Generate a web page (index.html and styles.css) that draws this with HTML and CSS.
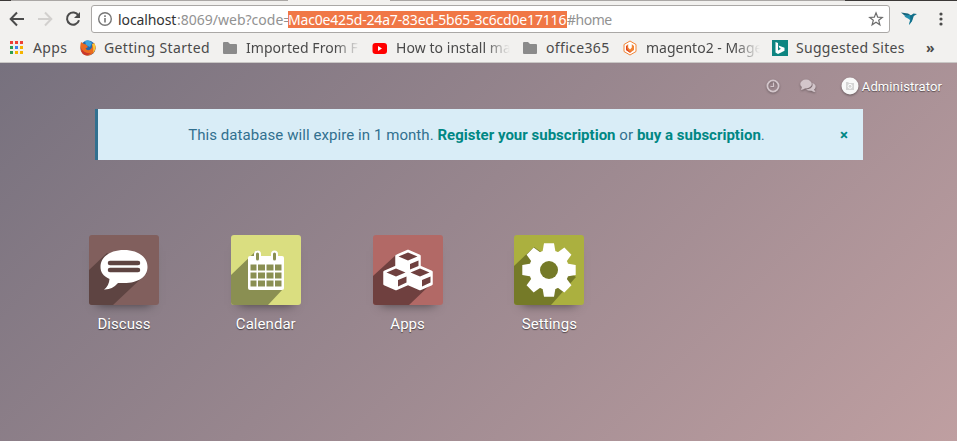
FILE: index.html
```html
<!DOCTYPE html>
<html lang="en">
<head>
<meta charset="utf-8">
<title>Odoo</title>
<link rel="stylesheet" href="styles.css">
</head>
<body>
<header class="browser">
  <div class="tabs"><span class="tab-end"></span><span class="tab-gap"></span><span class="tab-active"></span><span class="tab-gap wide"></span></div>
  <div class="toolbar">
    <svg class="nav" viewBox="0 0 16 16"><path d="M15 8H2M8 1.5L1.7 8L8 14.5" fill="none" stroke="#4b4b4b" stroke-width="2"/></svg>
    <svg class="nav" viewBox="0 0 16 16"><path d="M1 8H14M8 1.5L14.3 8L8 14.5" fill="none" stroke="#d2d0ce" stroke-width="2"/></svg>
    <svg class="nav" viewBox="0 0 16 16"><path d="M13.4 4.5A6.1 6.1 0 1 0 14 9.3" fill="none" stroke="#4b4b4b" stroke-width="2"/><path d="M15 1v6H9z" fill="#4b4b4b"/></svg>
    <div class="address">
      <svg class="info" viewBox="0 0 16 16"><circle cx="8" cy="8" r="6.3" fill="none" stroke="#777" stroke-width="1.4"/><path d="M8 7v4.6M8 4.2v1.7" stroke="#777" stroke-width="1.6"/></svg>
      <span class="host">localhost</span><span class="path">:8069/web?code=</span><span class="code">Mac0e425d-24a7-83ed-5b65-3c6cd0e17116</span><span class="hash">#home</span>
      <svg class="star" viewBox="0 0 16 16"><path d="M8 1.8l1.7 4.3 4.6.3-3.6 2.9 1.2 4.5L8 11.3l-3.9 2.5 1.2-4.5-3.6-2.9 4.6-.3z" fill="none" stroke="#6b6b6b" stroke-width="1.2"/></svg>
    </div>
    <svg class="bird" viewBox="0 0 16 14"><path d="M0 .5L7 1.500L11 4L7.500 5Q3 4 0 .5z" fill="#17647c"/><path d="M3 3.500L10 3L12 4L11 9L8 13L9 8L7 6.500Q4 5.500 3 3.500z" fill="#218fae"/><path d="M9 4L12.500 1.500L16 2L12.800 4L11 9L8 13L9.500 8z" fill="#126f89"/></svg>
    <svg class="menu" viewBox="0 0 4 14"><circle cx="2" cy="2" r="1.6"/><circle cx="2" cy="7" r="1.6"/><circle cx="2" cy="12" r="1.6"/></svg>
  </div>
  <nav class="bookmarks">
    <a class="bm apps"><svg viewBox="0 0 16 16"><path d="M1 1h3v3H1zM6 1h3v3H6zM11 1h3v3h-3z" fill="#ee4136"/><path d="M1 6h3v3H1zM1 11h3v3H1z" fill="#2c9f51"/><path d="M6 6h3v3H6z" fill="#3e82f0"/><path d="M11 6h3v3h-3zM6 11h3v3H6zM11 11h3v3h-3z" fill="#f5b400"/></svg><span>Apps</span></a>
    <a class="bm started"><svg viewBox="0 0 16 16"><circle cx="8" cy="8" r="7.6" fill="#2468ac"/><path d="M5 1Q9-1 12 3L10 7L6 5z" fill="#3da5df"/><path d="M1 2L4 4L6 4.5L8 7L5.5 8.5Q7 11 10 9.8Q13 8 12 4Q14 3 14.5 3.5Q17 9 13.5 13Q8 18 3 14Q-1 10 1 2z" fill="#ea6b20"/><path d="M12 4L14.5 3.5Q17 9 13 13Q14 8 12 4z" fill="#fac737"/><path d="M1 8Q4 14 11 13Q7 17 3 14Q1 12 1 8z" fill="#c9372c"/></svg><span>Getting Started</span></a>
    <a class="bm imported"><svg viewBox="0 0 16 16"><path d="M1 3Q1 2 2 2h4l2 2h6q1 0 1 1v8q0 1-1 1H2q-1 0-1-1z" fill="#8b8b8b"/></svg><span class="fade">Imported From F</span></a>
    <a class="bm video"><svg viewBox="0 0 16 16"><rect x=".5" y="3" width="14.5" height="11" rx="3" fill="#f00"/><path d="M6 6v5l4-2.5z" fill="#fff"/></svg><span class="fade">How to install ma</span></a>
    <a class="bm office"><svg viewBox="0 0 16 16"><path d="M1 3Q1 2 2 2h4l2 2h6q1 0 1 1v8q0 1-1 1H2q-1 0-1-1z" fill="#8b8b8b"/></svg><span>office365</span></a>
    <a class="bm magento"><svg viewBox="0 0 16 16"><path d="M8 1l6 3.500v7L8 15l-6-3.500v-7z" fill="#fff" stroke="#f28334" stroke-width="1"/><path d="M4 6L6.200 4V7.500L8 9.500L9.800 7.500V4L12 6V10L8 12.700L4 10z" fill="#f28334"/><path d="M4 6.300L5.200 5.500V9L8 12L9.800 11L8 12.700L4 10z" fill="#dc4424"/></svg><span class="fade">magento2 - Mage</span></a>
    <a class="bm suggested"><svg viewBox="0 0 16 16"><path d="M0 0h16v16H0z" fill="#0e8581"/><path d="M3.500 2l2.500 1v7.500l3-1.700-1.500-.8-1-2.500 6 2.200v3L6 14l-2.500-1.500z" fill="#fff"/></svg><span>Suggested Sites</span></a>
    <a class="bm more">»</a>
  </nav>
</header>
<main class="home">
  <div class="systray">
    <svg class="clock" viewBox="0 0 14 14"><circle cx="7" cy="7" r="5.600" fill="none" stroke="currentColor" stroke-width="1.800"/><path d="M7.500 3.500v4H4.500" fill="none" stroke="currentColor" stroke-width="1.200"/></svg>
    <svg class="chat" viewBox="0 0 16 14"><path d="M12.300 4Q16 5.500 15.600 8Q15 10 14 10.500L15.500 13Q13 13 11.500 11.800Q8 12 6 10.500Q12 10 12.700 6Q12.700 5 12.300 4z" fill="currentColor"/><ellipse cx="6" cy="5" rx="5.800" ry="4.400" fill="currentColor"/><path d="M2 7.500L1 11Q4 10.500 5.500 9z" fill="currentColor"/></svg>
    <div class="user"><svg viewBox="0 0 18 18"><circle cx="9" cy="9" r="8.500" fill="#f8f8f8"/><path d="M5 5h2l1 1h5v7H5z" fill="#d4d4d4"/><circle cx="9" cy="9.300" r="2" fill="#d4d4d4" stroke="#fff"/></svg><span>Administrator</span></div>
  </div>
  <div class="notice"><p>This database will expire in 1 month. <b>Register your subscription</b> or <b>buy a subscription</b>.</p><span class="close">×</span></div>
  <div class="apps-grid">
    <a class="app"><svg viewBox="0 0 70 70"><path d="M0 0h70v70H0z" fill="#815f5d"/><path d="M0 35L18 18L58 38L24 70H0z" fill="#5e4442"/><path d="M35 15C49 15 58.500 22 58.500 32S49 48 35 48L29 48Q23 55 15 54.500Q20 51 20.500 44C14 41 11.500 37 11.500 32C11.500 22 21 15 35 15z" fill="#fff"/><path d="M21 28H49M21 35H49" stroke="#5e4442" stroke-width="4.500" stroke-linecap="round"/></svg><span>Discuss</span></a>
    <a class="app"><svg viewBox="0 0 70 70"><path d="M0 0h70v70H0z" fill="#dade80"/><path d="M0 40L26 15L52 54L37 70H0z" fill="#8a8f52"/><path d="M19 21h32q2 0 2 2v30q0 2-2 2H19q-2 0-2-2V23q0-2 2-2z" fill="#fff"/><path d="M19.500 29.500h6v6h-6zM27 29.500h7v6h-7zM35.500 29.500h7v6h-7zM44 29.500h6.500v6H44zM19.500 37.500h6v6h-6zM27 37.500h7v6h-7zM35.500 37.500h7v6h-7zM44 37.500h6.500v6H44zM19.500 45.500h6v6h-6zM27 45.500h7v6h-7zM35.500 45.500h7v6h-7zM44 45.500h6.500v6H44z" fill="#8a8f52"/><rect x="24" y="16.500" width="5" height="10" rx="2.500" fill="#8a8f52" stroke="#fff" stroke-width="2"/><rect x="41" y="16.500" width="5" height="10" rx="2.500" fill="#8a8f52" stroke="#fff" stroke-width="2"/></svg><span>Calendar</span></a>
    <a class="app"><svg viewBox="0 0 70 70"><path d="M0 0h70v70H0z" fill="#b26966"/><path d="M0 41L24 19L57 50L36 70H0z" fill="#6f403f"/><g stroke="#fff" stroke-width="2.500" stroke-linejoin="round"><path d="M35 16L46.500 21V32.500L35 38L23.500 32.500V21z" fill="#fff"/><path d="M23 32L34.500 37V49L23 54L11.500 49V37z" fill="#fff"/><path d="M47 32L58.500 37V49L47 54L35.500 49V37z" fill="#fff"/></g><path d="M35 17.500L44.500 21.500L35 25.500L25.500 21.500zM23 33.500L32.500 37.500L23 41.500L13.500 37.500zM47 33.500L56.500 37.500L47 41.500L37.500 37.500zM37 29L45.500 25.500V31L37 34.500zM25 45L33.500 41.500V47.500L25 51.500zM49 45L57.500 41.500V47.500L49 51.500z" fill="#6f403f"/></svg><span>Apps</span></a>
    <a class="app"><svg viewBox="0 0 70 70"><path d="M0 0h70v70H0z" fill="#abb03f"/><path d="M0 31L20 12L62 42L37 70H0z" fill="#757a28"/><g transform="translate(35 35)" fill="#fff"><circle r="20"/><path id="tooth" d="M-6.500-18L-5-26.700H5L6.500-18V18L5 26.700H-5L-6.500 18z"/><use href="#tooth" transform="rotate(45)"/><use href="#tooth" transform="rotate(90)"/><use href="#tooth" transform="rotate(135)"/></g><circle cx="35" cy="35" r="9" fill="#757a28"/></svg><span>Settings</span></a>
  </div>
</main>
</body>
</html>
```
FILE: styles.css
```css
* { box-sizing: border-box; }
body { margin: 0; height: 441px; overflow: hidden; display: flex; flex-direction: column; font-family: Roboto, sans-serif; }
svg { display: block; flex: none; }
.browser { height: 63px; background: #f2f1ef; border-bottom: 1px solid #c9c7c5; font-family: "Noto Sans", sans-serif; font-size: 14px; color: #4a4a4a; }
.tabs { display: flex; height: 1px; background: #3b3837; }
.tab-end { width: 11px; }
.tab-gap { width: 277px; background: #aaa7a5; }
.tab-active { width: 102px; background: #f2f1ef; }
.tab-gap.wide { width: 455px; }
.toolbar { display: flex; align-items: center; height: 36px; padding: 0 9px; }
.nav { width: 16px; height: 16px; margin-right: 12px; }
.nav:nth-child(3) { margin-right: 10px; }
.address { display: flex; align-items: center; width: 799px; height: 28px; padding: 0 5px; background: #fff; border: 1px solid #aaa8a6; border-radius: 3px; white-space: nowrap; line-height: 17px; }
.info { width: 16px; height: 16px; margin-right: 5px; }
.host { width: 59px; color: #333; letter-spacing: -.1px; }
.path { width: 111px; color: #929292; }
.code { width: 279px; background: #f07746; color: #fff; letter-spacing: -.18px; }
.hash { color: #929292; letter-spacing: -.5px; }
.star { width: 16px; height: 16px; margin-left: auto; }
.bird { width: 16px; height: 14px; margin-left: 11px; }
.menu { width: 4px; height: 14px; margin-left: 22px; fill: #4b4b4b; }
.bookmarks { display: flex; align-items: center; height: 22px; padding-left: 9px; white-space: nowrap; line-height: 20px; letter-spacing: .35px; }
.bm { display: flex; align-items: center; gap: 8px; }
.bm svg { width: 16px; height: 16px; }
.apps { width: 71px; }
.started { width: 142px; }
.imported, .video { width: 150px; }
.imported { letter-spacing: .05px; }
.video { letter-spacing: .05px; }
.office { width: 100px; }
.magento { width: 150px; letter-spacing: 0; }
.suggested { width: 154px; letter-spacing: .3px; }
.more { font-weight: 700; }
.bm .fade { width: 114px; -webkit-mask-image: linear-gradient(to right, #000 78%, transparent); mask-image: linear-gradient(to right, #000 78%, transparent); }
.home { flex: 1; background: linear-gradient(135deg, #77717e, #bf9fa1); color: #fff; }
.systray { display: flex; align-items: center; justify-content: flex-end; height: 46px; padding-right: 15px; color: #d3c6cb; }
.clock { width: 14px; height: 14px; margin-right: 20px; filter: drop-shadow(0 1px 1px #0005); }
.chat { width: 16px; height: 14px; margin-right: 25px; filter: drop-shadow(0 1px 1px #0005); }
.user { display: flex; align-items: center; gap: 3px; color: #fff; font-size: 13px; letter-spacing: .1px; text-shadow: 0 1px 1px #0007; }
.user svg { width: 18px; height: 18px; filter: drop-shadow(0 1px 1px #0006); }
.notice { display: flex; align-items: center; width: 768px; height: 51px; margin-left: 95px; padding-right: 15px; background: #d9edf7; border-left: 3px solid #31708f; color: #31708f; font-size: 15px; }
.notice p { flex: 1; margin: 0; padding-left: 15px; text-align: center; letter-spacing: .07px; }
.notice b, .close { color: #008784; font-weight: 700; }
.notice b { letter-spacing: .01px; }
.apps-grid { display: flex; gap: 71.8px; margin: 75px 0 0 89px; }
.app { width: 70px; display: flex; flex-direction: column; align-items: center; font-size: 15px; letter-spacing: .05px; text-shadow: 0 1px 1px #0008; }
.app svg { width: 70px; height: 70px; margin-bottom: 10px; border-radius: 3px; box-shadow: 0 8px 10px -8px #0008; }
```
